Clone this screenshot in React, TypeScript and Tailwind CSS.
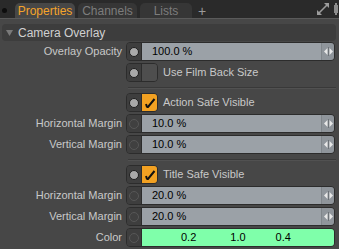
import React from 'react';

const font = { fontFamily: '"Liberation Sans", Arial, sans-serif' };

function Dot({ lit }: { lit?: boolean }) {
  return (
    <div className="w-[15px] h-full flex items-center justify-center border-r border-[#2c2c2c] bg-[#3e3e3e] shrink-0">
      <div
        className={`w-[10px] h-[10px] rounded-full border ${
          lit ? 'bg-[#a9a9a9] border-[#1e1e1e]' : 'bg-[#404040] border-[#575757]'
        }`}
      />
    </div>
  );
}

function Arrows() {
  return (
    <div className="w-[13px] h-full flex items-center justify-center border-l border-[#80868b] bg-[#8f959b]">
      <svg width="11" height="9" viewBox="0 0 11 9">
        <path d="M4.5 1 L1 4.5 L4.5 8 Z" fill="#e8e8e8" />
        <path d="M6.5 1 L10 4.5 L6.5 8 Z" fill="#e8e8e8" />
        <rect x="5" y="0" width="1" height="9" fill="#6d7277" />
      </svg>
    </div>
  );
}

function Field({ label, value, lit }: { label: string; value: string; lit?: boolean }) {
  return (
    <div className="flex items-center h-[19px]">
      <div className="w-[122px] text-right text-[11px] text-[#c9c9c9] shrink-0">{label}</div>
      <div className="ml-[4px] w-[209px] h-[19px] flex rounded-[4px] border border-[#2c2c2c] overflow-hidden">
        <Dot lit={lit} />
        <div className="flex-1 flex items-center bg-[#9ba1a7] pl-[10px] text-[11px] text-black">{value}</div>
        <Arrows />
      </div>
    </div>
  );
}

function Check({ label, checked }: { label: string; checked?: boolean }) {
  return (
    <div className="flex items-center h-[19px]">
      <div className="w-[122px] shrink-0" />
      <div className="ml-[4px] w-[32px] h-[19px] flex rounded-[4px] border border-[#2c2c2c] overflow-hidden">
        <Dot lit />
        <div className={`flex-1 flex items-center justify-center ${checked ? 'bg-[#f2a122]' : 'bg-[#4e4e4e]'}`}>
          {checked && (
            <svg width="12" height="12" viewBox="0 0 12 12">
              <path d="M2.5 10 L4 10 L10.5 2" stroke="#111" strokeWidth="2" fill="none" />
              <path d="M2 7 L3 10" stroke="#111" strokeWidth="2" fill="none" />
            </svg>
          )}
        </div>
      </div>
      <div className="ml-[5px] text-[11px] text-[#c9c9c9]">{label}</div>
    </div>
  );
}

function Sep() {
  return (
    <div className="h-[11px] flex items-center pl-[128px] pr-[3px]">
      <div className="w-full h-[2px] border-t border-[#393939] border-b border-b-[#515151]" />
    </div>
  );
}

export default function App() {
  return (
    <div className="w-[339px] h-[249px] bg-[#474747] overflow-hidden" style={font}>
      {/* tab strip */}
      <div className="h-[19px] bg-[#2a2a2a] border-b border-[#5a5a5a] flex items-end relative">
        <div className="absolute left-[2px] top-[8px] w-[5px] h-[5px] rounded-full bg-[#0d0d0d]" />
        <div className="ml-[15px] w-[60px] h-[15px] rounded-t-[5px] bg-[#474747] text-[12px] text-[#f5a42a] flex items-center justify-center">
          Properties
        </div>
        <div className="ml-[3px] w-[59px] h-[15px] rounded-t-[5px] bg-[#363636] text-[12px] text-[#7d7d7d] flex items-center justify-center">
          Channels
        </div>
        <div className="ml-[3px] w-[52px] h-[15px] rounded-t-[5px] bg-[#363636] text-[12px] text-[#7d7d7d] flex items-center justify-center">
          Lists
        </div>
        <div className="ml-[6px] h-[15px] text-[14px] text-[#9a9a9a] flex items-center leading-none">+</div>
        <div className="ml-auto mr-[1px] h-[19px] flex items-center gap-[3px]">
          <svg width="14" height="14" viewBox="0 0 14 14">
            <path d="M8 1 H13 V6 Z" fill="#9c9c9c" />
            <path d="M1 8 V13 H6 Z" fill="#9c9c9c" />
            <path d="M11 3 L3 11" stroke="#9c9c9c" strokeWidth="1.6" />
          </svg>
          <svg width="5" height="12" viewBox="0 0 5 12">
            <rect x="1" y="2" width="4" height="8" fill="#8c8c8c" />
            <rect x="2" y="0" width="2" height="12" fill="#8c8c8c" />
          </svg>
        </div>
      </div>

      <div className="pt-[5px] px-[2px]">
        <div className="h-[17px] rounded-[4px] bg-[#3d3d3d] flex items-center mr-[1px]">
          <svg width="8" height="6" viewBox="0 0 8 6" className="ml-[4px]">
            <path d="M0 0 H7 L3.5 6 Z" fill="#7a7a7a" />
          </svg>
          <span className="ml-[4px] text-[12px] text-[#d0d0d0]">Camera Overlay</span>
        </div>
      </div>

      <div className="mt-[1px] flex flex-col">
        <div className="flex flex-col gap-[2px]">
          <Field label="Overlay Opacity" value="100.0 %" lit />
          <Check label="Use Film Back Size" />
        </div>
        <Sep />
        <div className="flex flex-col gap-[2px]">
          <Check label="Action Safe Visible" checked />
          <Field label="Horizontal Margin" value="10.0 %" />
          <Field label="Vertical Margin" value="10.0 %" />
        </div>
        <Sep />
        <div className="flex flex-col gap-[2px]">
          <Check label="Title Safe Visible" checked />
          <Field label="Horizontal Margin" value="20.0 %" />
          <Field label="Vertical Margin" value="20.0 %" />
          <div className="flex items-center h-[19px]">
            <div className="w-[122px] text-right text-[11px] text-[#c9c9c9] shrink-0">Color</div>
            <div className="ml-[4px] w-[209px] h-[19px] flex rounded-[4px] border border-[#2c2c2c] overflow-hidden">
              <Dot />
              <div className="flex-1 flex items-center bg-[#7fffaa] text-[11px] text-black">
                <span className="ml-[39px]">0.2</span>
                <span className="ml-[34px]">1.0</span>
                <span className="ml-[30px]">0.4</span>
              </div>
            </div>
          </div>
        </div>
      </div>
    </div>
  );
}
